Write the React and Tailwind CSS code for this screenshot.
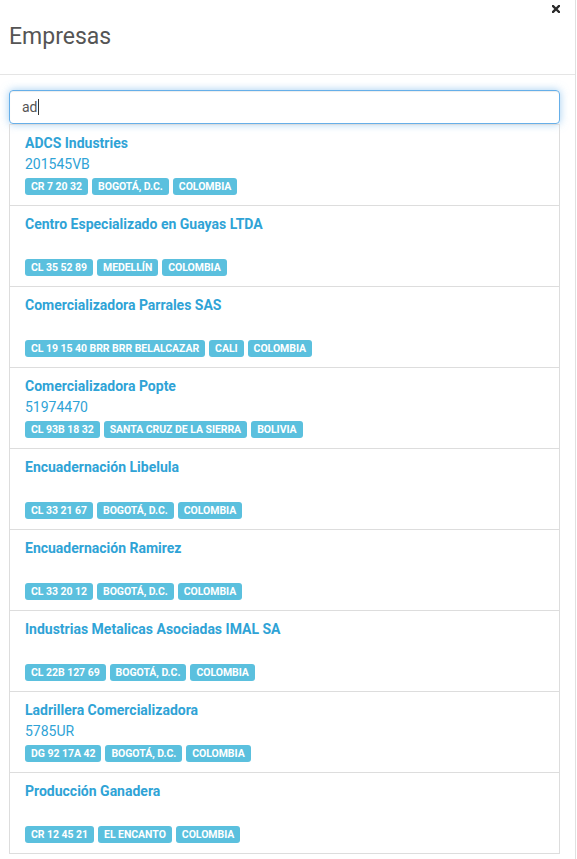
import React from 'react'

const empresas = [
  { name: 'ADCS Industries', code: '201545VB', tags: ['CR 7 20 32', 'BOGOTÁ, D.C.', 'COLOMBIA'] },
  { name: 'Centro Especializado en Guayas LTDA', code: '', tags: ['CL 35 52 89', 'MEDELLÍN', 'COLOMBIA'] },
  { name: 'Comercializadora Parrales SAS', code: '', tags: ['CL 19 15 40 BRR BRR BELALCAZAR', 'CALI', 'COLOMBIA'] },
  { name: 'Comercializadora Popte', code: '51974470', tags: ['CL 93B 18 32', 'SANTA CRUZ DE LA SIERRA', 'BOLIVIA'] },
  { name: 'Encuadernación Libelula', code: '', tags: ['CL 33 21 67', 'BOGOTÁ, D.C.', 'COLOMBIA'] },
  { name: 'Encuadernación Ramirez', code: '', tags: ['CL 33 20 12', 'BOGOTÁ, D.C.', 'COLOMBIA'] },
  { name: 'Industrias Metalicas Asociadas IMAL SA', code: '', tags: ['CL 22B 127 69', 'BOGOTÁ, D.C.', 'COLOMBIA'] },
  { name: 'Ladrillera Comercializadora', code: '5785UR', tags: ['DG 92 17A 42', 'BOGOTÁ, D.C.', 'COLOMBIA'] },
  { name: 'Producción Ganadera', code: '', tags: ['CR 12 45 21', 'EL ENCANTO', 'COLOMBIA'] },
]

function Item({ e }) {
  return (
    <div className="border-t border-[#ddd] px-[15px] pt-[10px] pb-[10px]">
      <div className="h-[17px] leading-[17px] text-[14px] font-bold text-[#2fa3d6] mb-[2px] whitespace-nowrap">
        {e.name}
      </div>
      <div className="h-[20px] leading-[20px] text-[14px] text-[#2fa3d6]">{e.code}</div>
      <div className="flex gap-[4px] mt-[4px]">
        {e.tags.map((t, i) => (
          <span
            key={i}
            className="h-[17px] leading-[17px] px-[6px] rounded-[3px] bg-[#5bc0de] text-white text-[10.5px] font-bold whitespace-nowrap tracking-[-0.05px]"
          >
            {t}
          </span>
        ))}
      </div>
    </div>
  )
}

export default function App() {
  return (
    <div className="w-[577px] h-[859px] overflow-hidden bg-white font-['Roboto','Liberation_Sans',sans-serif]">
      <div className="relative w-[576px] h-full border-r border-[#e0e0e0]">
        {/* close */}
        <svg className="absolute top-[5px] left-[552px]" width="8" height="8" viewBox="0 0 8 8">
          <path d="M1 1 L7 7 M7 1 L1 7" stroke="#2b2b2b" strokeWidth="2.4" strokeLinecap="square" />
        </svg>

        {/* header */}
        <div className="h-[75px] border-b border-[#e5e5e5] pl-[9px] pt-[24px]">
          <h4 className="text-[23px] leading-[26px] text-[#555] font-normal">Empresas</h4>
        </div>

        {/* body */}
        <div className="pl-[9px] pt-[15px]">
          <div className="w-[551px]">
            <div className="h-[34px] rounded-[4px] border border-[#66afe9] shadow-[inset_0_1px_1px_rgba(0,0,0,0.075),0_0_8px_rgba(102,175,233,0.6)] pl-[12px] flex items-center text-[14px] text-[#555]">
              <span>ad</span>
              <span className="w-px h-[16px] bg-[#333]" />
            </div>
            <div className="border-x border-b border-[#ddd]">
              {empresas.map((e, i) => (
                <Item key={i} e={e} />
              ))}
            </div>
          </div>
        </div>
      </div>
    </div>
  )
}
